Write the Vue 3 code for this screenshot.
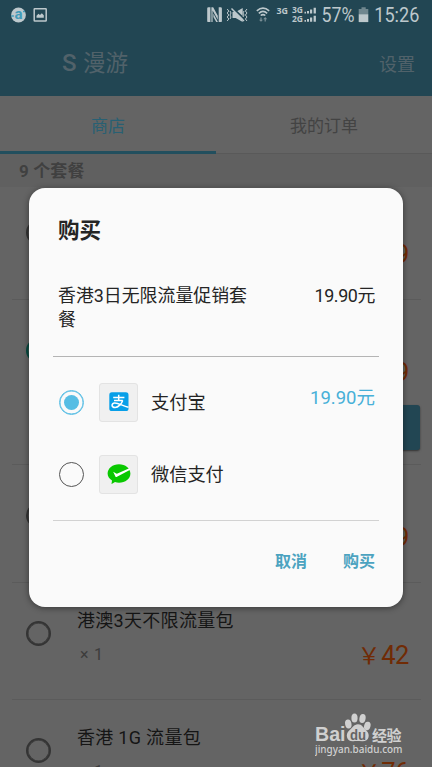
<script setup>
const plans = [
  { id: 1, name: '香港3日无限流量包', price: '19.9', kind: 'first' },
  { id: 2, name: '香港3日无限流量促销套餐', price: '19.9', kind: 'open' },
  { id: 3, name: '香港7日流量包', price: '39.9', kind: '' },
  { id: 4, name: '港澳3天不限流量包', price: '42', kind: '' },
  { id: 5, name: '香港 1G 流量包', price: '76', kind: '' },
]
</script>

<template>
  <div class="screen">
    <header class="header">
      <div class="status">
        <svg class="status-left" width="50" height="30" viewBox="0 0 50 30">
          <circle cx="18.5" cy="15" r="7.4" fill="#bdc8cc" />
          <text x="18.6" y="19.2" text-anchor="middle" class="browser-a">a</text>
          <path d="M11.3 16h2.6M23 11.5h2" stroke="#419bb9" stroke-width="1.6" />
          <rect x="34.2" y="8.7" width="12" height="12.4" rx=".6" fill="none" stroke="#bdc8cc" stroke-width="1.5" />
          <path d="M36.5 17.8v-2l2-2 1.5 1.2 1.8-1.7 2 2v2.5z" fill="#bdc8cc" />
        </svg>
        <svg class="status-right" width="232" height="30" viewBox="200 0 232 30">
          <g fill="#bdc8cc">
            <path d="M207.2 8.5q0-1.2 1.2-1.2h2v14.8h-2q-1.2 0-1.2-1.2zM221.9 8.5q0-1.2-1.2-1.2h-2v14.8h2q1.2 0 1.2-1.2z" />
            <path d="M211.4 7.3h1.8l4.6 8.5v4l-5.2-9.300v11.600h-1.200zM216.200 22.100l-2.800-5v-3.600l4.500 8.600z" />
            <path d="M232.500 12h3.200l7-4v14l-7-4h-3.200z" />
            <path d="M361.500 9V7.300h4.200V9h2.600v5.200h-9.600V9z" opacity=".5" />
            <path d="M358.700 14.200h9.600v7.900h-9.600z" />
          </g>
          <g fill="none" stroke="#bdc8cc">
            <path d="M232.500 8l13 12" stroke="#224653" stroke-width="2" />
            <path d="M231.500 8.500l12.500 12.500" stroke-width="1.500" />
            <path d="M227.200 9l1.600 2-1.600 2 1.600 2-1.600 2 1.600 2-1.600 2M230 11l1 2-1 2 1 2-1 2M247 9l-1.600 2 1.600 2-1.600 2 1.600 2-1.600 2 1.600 2M244 11l-1 2 1 2-1 2" stroke-width="1" />
            <path d="M256.800 10.800q6.200-5.300 12.400 0M258.800 13.300q4.200-3.700 8.400 0M260.700 15.500q2.300-1.900 4.600 0" stroke-width="1.600" />
          </g>
          <path d="M261 21.800l-2-2h1.400v-2.300h1.200v2.300h1.400zM265.200 17l2 2.200h-1.400v2.300h-1.200v-2.300h-1.400z" fill="#7c9098" />
          <g fill="#bdc8cc">
            <path d="M304.500 11.800h1.500v1.800h-1.500zM307 11h2v2.600h-2zM310 9.400h2.200v4.200H310zM313.600 7.800h2.300v5.800h-2.300zM304.500 19.900h1.500v1.800h-1.500zM307 19h2v2.700h-2zM310 17.500h2.200v4.200H310zM313.600 15.800h2.300v5.900h-2.300z" />
            <text x="276.500" y="14" textLength="11.500" lengthAdjust="spacingAndGlyphs" class="net">3G</text>
            <text x="292" y="13.200" textLength="11" lengthAdjust="spacingAndGlyphs" class="net">3G</text>
            <text x="292" y="22" textLength="11" lengthAdjust="spacingAndGlyphs" class="net">2G</text>
            <text x="321.500" y="22" textLength="33" lengthAdjust="spacingAndGlyphs" class="clock">57%</text>
            <text x="374.300" y="22" textLength="45" lengthAdjust="spacingAndGlyphs" class="clock">15:26</text>
          </g>
        </svg>
      </div>
      <div class="bar">
        <h1 class="title"><b>S</b> 漫游</h1>
        <span class="settings">设置</span>
      </div>
    </header>

    <nav class="tabs">
      <div class="tab active">商店</div>
      <div class="tab">我的订单</div>
    </nav>
    <div class="count">9 个套餐</div>

    <ul class="list">
      <li v-for="p in plans" :key="p.id" class="row" :class="p.kind">
        <span class="ring"></span>
        <div class="info">
          <div class="name">{{ p.name }}</div>
          <div class="qty">× 1</div>
        </div>
        <div class="side">
          <div class="price"><span class="yen">￥</span>{{ p.price }}</div>
          <div v-if="p.kind === 'open'" class="buy"></div>
        </div>
      </li>
    </ul>

    <section class="dialog">
      <h2 class="dialog-title">购买</h2>
      <div class="item">
        <div class="item-name">香港3日无限流量促销套餐</div>
        <div class="item-price">19.90元</div>
      </div>
      <div class="methods">
        <div class="method">
          <span class="radio on"></span>
          <span class="logo">
            <svg width="20" height="20" viewBox="0 0 20 20">
              <rect x=".3" y=".3" width="19.200" height="18.800" rx="2.600" fill="#079fe8" />
              <g fill="none" stroke="#fff" stroke-width="1.500">
                <path d="M4.200 5.400h11.200M9.700 2.800v5.600M5 8.500h8.800" />
                <path d="M13.700 8.400c-1.100 3.200-4.300 7.100-7.600 7.100-3.900 0-4-4.200-.5-4.400 3.700-.2 7.400 2.500 13.900 4.200" />
              </g>
            </svg>
          </span>
          <span class="method-name">支付宝</span>
          <span class="method-price">19.90元</span>
        </div>
        <div class="method">
          <span class="radio"></span>
          <span class="logo">
            <svg width="24" height="20" viewBox="0 0 24 20">
              <path d="M12 .2c6.400 0 11.400 4.100 11.400 9.300s-5 9.200-11.400 9.200c-1.400 0-2.700-.2-4-.6l-3.500 2 .5-3.600C2.300 14.800.6 12.300.6 9.500.6 4.300 5.600.2 12 .2z" fill="#09c800" />
              <path d="M6.200 7.700l3 1.800q.6.300 1.300 0L22.300 4.300 23.200 5.700 10 12.800q-1.100.6-1.600-.4z" fill="#fff" />
            </svg>
          </span>
          <span class="method-name">微信支付</span>
        </div>
      </div>
      <div class="actions">
        <button class="action">取消</button>
        <button class="action">购买</button>
      </div>
    </section>

    <svg class="watermark" width="100" height="48" viewBox="0 0 100 48" fill="#d0d0d0">
      <text x="0" y="30" textLength="30.500" lengthAdjust="spacingAndGlyphs" class="wm-brand">Bai</text>
      <ellipse cx="33.300" cy="13" rx="3.200" ry="4.500" transform="rotate(-10 33.300 13)" />
      <ellipse cx="39.500" cy="7" rx="3.100" ry="4.500" />
      <ellipse cx="47.500" cy="7.500" rx="3.100" ry="4.500" transform="rotate(10 47.500 7.500)" />
      <ellipse cx="52.300" cy="15" rx="3.200" ry="4.300" transform="rotate(15 52.300 15)" />
      <path d="M43 13.200c4.200 0 5.200 3.600 8.300 6.300 4.200 3.800 3 10.800-3.800 10.800-3.500 0-6-.4-9 0-6.800.6-8.700-6.800-4.300-10.800 3-2.400 4.600-6.300 8.800-6.300z" />
      <text x="35" y="28.500" textLength="16" lengthAdjust="spacingAndGlyphs" class="wm-du">du</text>
      <text x="57" y="29.500" textLength="29.500" class="wm-cn">经验</text>
      <text x="0" y="42" textLength="87.500" lengthAdjust="spacingAndGlyphs" class="wm-url">jingyan.baidu.com</text>
    </svg>
  </div>
</template>

<style>
body {
  margin: 0;
  background: #646464;
}
</style>

<style scoped>
.screen {
  position: relative;
  width: 432px;
  height: 767px;
  overflow: hidden;
  background: #646464;
  font-family: Roboto, "Noto Sans CJK SC", sans-serif;
}
h1, h2, ul {
  margin: 0;
  padding: 0;
  font-weight: 400;
}
.header {
  height: 96px;
  background: #224653;
}
.status {
  display: flex;
  justify-content: space-between;
  width: 432px;
  height: 30px;
}
.browser-a {
  font: 700 15px Roboto, sans-serif;
  fill: #419bb9;
}
.net {
  font: 700 8.500px "Open Sans", sans-serif;
}
.clock {
  font: 400 19.500px Roboto, sans-serif;
}
.bar {
  display: flex;
  justify-content: space-between;
  align-items: center;
  height: 66px;
  padding: 0 17px 0 62px;
  color: #51626a;
}
.title {
  font-size: 22.500px;
  line-height: 30px;
}
.title b {
  margin-right: 1px;
  font-weight: 500;
  font-size: 24px;
}
.settings {
  font-size: 18px;
}
.tabs {
  display: flex;
  height: 57px;
  border-bottom: 1px solid #595959;
}
.tab {
  flex: 1;
  box-sizing: border-box;
  height: 58px;
  font-size: 17px;
  line-height: 61px;
  text-align: center;
  color: #434343;
}
.tab.active {
  border-bottom: 3px solid #224f5e;
  color: #286073;
}
.count {
  height: 33px;
  padding-left: 19px;
  background: #606060;
  color: #404040;
  font-size: 17px;
  font-weight: 700;
  line-height: 34px;
  letter-spacing: .1px;
}
.list {
  list-style: none;
}
.row {
  display: flex;
  box-sizing: border-box;
  height: 117.500px;
  margin: 0 11px 0 12px;
  padding: 25px 12px 0 14px;
  border-bottom: 1px solid #5b5b5b;
}
.row.first {
  height: 113px;
  padding-top: 20px;
}
.row.open {
  height: 165px;
}
.ring {
  box-sizing: border-box;
  width: 25px;
  height: 25px;
  margin-top: 13px;
  border: 2px solid #343434;
  border-radius: 50%;
  box-shadow: inset 0 0 0 .500px #343434;
}
.open .ring {
  border-color: #064b40;
  box-shadow: inset 0 0 0 .500px #064b40;
}
.info {
  flex: 1;
  padding-left: 26px;
}
.name {
  font-size: 18px;
  line-height: 26px;
  letter-spacing: .3px;
  color: #151515;
}
.qty {
  margin-top: 10px;
  padding-left: 3px;
  font-size: 16px;
  line-height: 22px;
  letter-spacing: .7px;
  color: #3c3c3c;
}
.side {
  padding-top: 31px;
}
.price {
  font-size: 25.500px;
  line-height: 32px;
  letter-spacing: -.4px;
  text-align: right;
  color: #702b05;
}
.yen {
  margin-right: 1px;
  font-size: 23px;
}
.buy {
  height: 45px;
  margin: 15px -11px 0 -10px;
  border-radius: 3px;
  background: #224653;
  box-shadow: 0 1px 2px #333;
}
.dialog {
  position: absolute;
  left: 29px;
  top: 188px;
  box-sizing: border-box;
  width: 374px;
  height: 419px;
  padding: 25px 24px 0;
  border-radius: 16px;
  background: #fafafa;
  box-shadow: 0 1px 6px rgba(0, 0, 0, .45);
  color: #252525;
}
.dialog-title {
  padding-left: 5px;
  font-size: 21.500px;
  font-weight: 700;
  line-height: 36px;
}
.item {
  display: flex;
  justify-content: space-between;
  box-sizing: border-box;
  height: 108px;
  padding: 35px 4px 0 5px;
  border-bottom: 1px solid #b4b4b4;
  font-size: 17.900px;
  line-height: 24px;
}
.item-name {
  width: 200px;
}
.item-price {
  letter-spacing: -.4px;
}
.methods {
  box-sizing: border-box;
  height: 164px;
  padding-top: 9px;
  border-bottom: 1px solid #d2d2d2;
}
.method {
  display: flex;
  align-items: center;
  height: 72px;
  padding: 0 5px 0 6px;
}
.radio {
  box-sizing: border-box;
  width: 25px;
  height: 25px;
  border: 1px solid #555;
  border-radius: 50%;
}
.radio.on {
  padding: 4px;
  border: 1px solid #56bde4;
  background: #56bde4 content-box;
  box-shadow: inset 0 0 0 .500px #56bde4;
}
.logo {
  display: flex;
  align-items: center;
  justify-content: center;
  box-sizing: border-box;
  width: 39px;
  height: 39px;
  margin: 0 13px 0 15px;
  border: 1px solid #e3e3e3;
  border-radius: 3px;
  background: #f0f0f0;
}
.method-name {
  flex: 1;
  margin-bottom: 2px;
  font-size: 18.200px;
}
.method-price {
  margin: 0 -1px 12px 0;
  font-size: 18.500px;
  color: #47b0d8;
}
.actions {
  display: flex;
  justify-content: flex-end;
  gap: 36px;
  padding: 29px 4px 0 0;
}
.action {
  padding: 0;
  border: 0;
  background: none;
  font-family: inherit;
  font-size: 16px;
  font-weight: 700;
  line-height: 24px;
  color: #4ca3c0;
}
.watermark {
  position: absolute;
  left: 315px;
  top: 711px;
}
.wm-brand {
  font: 700 20px "Liberation Sans", sans-serif;
}
.wm-du {
  font: 700 14px "Liberation Sans", sans-serif;
  fill: #646464;
}
.wm-cn {
  font: 700 15px "Noto Sans CJK SC", sans-serif;
}
.wm-url {
  font: 500 11px "Noto Sans", sans-serif;
}
</style>
